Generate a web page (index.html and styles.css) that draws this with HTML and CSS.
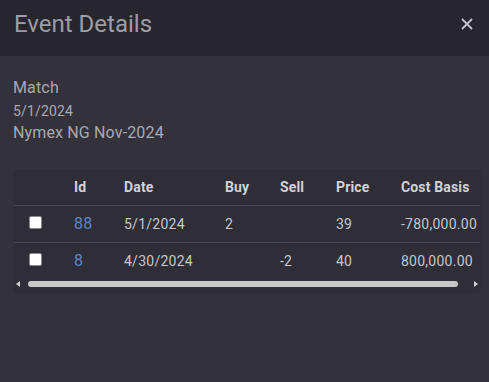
FILE: index.html
```html
<!DOCTYPE html>
<html lang="en">

<head>
	<meta charset="UTF-8">
	<meta name="viewport" content="width=device-width, initial-scale=1.0">
	<title>Event Details</title>
	<link rel="stylesheet" href="styles.css">
</head>

<body>
	<main class="dialog">
		<header class="dialog-head">
			<h1>Event Details</h1>
			<button class="close" aria-label="Close">
				<svg width="12" height="12" viewBox="0 0 12 12">
					<path d="M1 1 L11 11 M11 1 L1 11" stroke="currentColor" stroke-width="1.8" />
				</svg>
			</button>
		</header>

		<section class="dialog-body">
			<div class="info">
				<p class="kind">Match</p>
				<p class="date">5/1/2024</p>
				<p class="contract">Nymex NG Nov-2024</p>
			</div>

			<div class="card">
				<table>
					<thead>
						<tr>
							<th class="c-check"></th>
							<th class="c-id">Id</th>
							<th class="c-date">Date</th>
							<th class="c-buy">Buy</th>
							<th class="c-sell">Sell</th>
							<th class="c-price">Price</th>
							<th class="c-cost">Cost Basis</th>
						</tr>
					</thead>
					<tbody>
						<tr>
							<td class="c-check"><span class="box"></span></td>
							<td class="c-id"><a href="#">88</a></td>
							<td>5/1/2024</td>
							<td>2</td>
							<td></td>
							<td>39</td>
							<td>-780,000.00</td>
						</tr>
						<tr>
							<td class="c-check"><span class="box"></span></td>
							<td class="c-id"><a href="#">8</a></td>
							<td>4/30/2024</td>
							<td></td>
							<td>-2</td>
							<td>40</td>
							<td>800,000.00</td>
						</tr>
					</tbody>
				</table>
				<div class="hscroll">
					<span class="arrow left"></span>
					<span class="thumb"></span>
					<span class="arrow right"></span>
				</div>
			</div>
		</section>
	</main>
</body>

</html>
```

FILE: styles.css
```css
* {
	margin: 0;
	padding: 0;
	box-sizing: border-box;
}

html,
body {
	height: 100%;
}

body {
	background: #33313c;
	font-family: Roboto, "Liberation Sans", sans-serif;
	color: #b4b4bc;
}

.dialog {
	display: flex;
	flex-direction: column;
	min-height: 100%;
}

.dialog-head {
	display: flex;
	align-items: center;
	justify-content: space-between;
	height: 56px;
	padding: 0 14px 0 14px;
	background: #27262f;
}

.dialog-head h1 {
	font-size: 24px;
	font-weight: 400;
	color: #9d9da6;
	margin-top: -8px;
}

.close {
	display: flex;
	border: none;
	background: none;
	color: #c4c4cc;
	margin-top: -8px;
	margin-right: 2px;
}

.dialog-body {
	padding: 21px 8px 0 13px;
}

.info {
	color: #a9a9b1;
	margin-bottom: 25px;
	letter-spacing: 0.15px;
}

.info p {
	line-height: 22px;
}

.kind,
.contract {
	font-size: 16px;
}

.date {
	font-size: 14px;
	margin-top: 1px;
}

.card {
	background: #2f2d37;
	border-radius: 4px;
	overflow: hidden;
	padding-bottom: 5px;
}

table {
	border-collapse: collapse;
	width: 467px;
	font-size: 14px;
	letter-spacing: 0.25px;
}

th,
td {
	text-align: left;
	white-space: nowrap;
	height: 37px;
	padding: 0;
}

th {
	height: 36px;
	font-weight: 700;
	color: #d2d2d8;
	letter-spacing: 0.15px;
}

td {
	color: #c6c6cc;
}

thead tr,
tbody tr:first-child {
	border-bottom: 1px solid #47454f;
}

.c-check {
	width: 61px;
	padding-left: 16px;
}

.c-id {
	width: 50px;
}

.c-date {
	width: 101px;
}

.c-buy {
	width: 55px;
}

.c-sell {
	width: 56px;
}

.c-price {
	width: 65px;
}

.c-id a {
	color: #5b86c6;
	text-decoration: none;
	font-size: 16px;
}

.box {
	display: block;
	width: 13px;
	height: 13px;
	background: #fff;
	border: 1px solid #8a8a8a;
	border-radius: 2px;
	margin-top: -3px;
}

.hscroll {
	display: flex;
	align-items: center;
	height: 8px;
	margin-top: 1px;
	padding: 0 3px;
}

.arrow {
	width: 0;
	height: 0;
	border-top: 3px solid transparent;
	border-bottom: 3px solid transparent;
}

.arrow.left {
	border-right: 4px solid #d0d0d0;
}

.arrow.right {
	border-left: 4px solid #d0d0d0;
}

.thumb {
	flex: 1;
	height: 6px;
	margin: 0 16px 0 8px;
	background: #c8c8c8;
	border-radius: 3px;
}
```
